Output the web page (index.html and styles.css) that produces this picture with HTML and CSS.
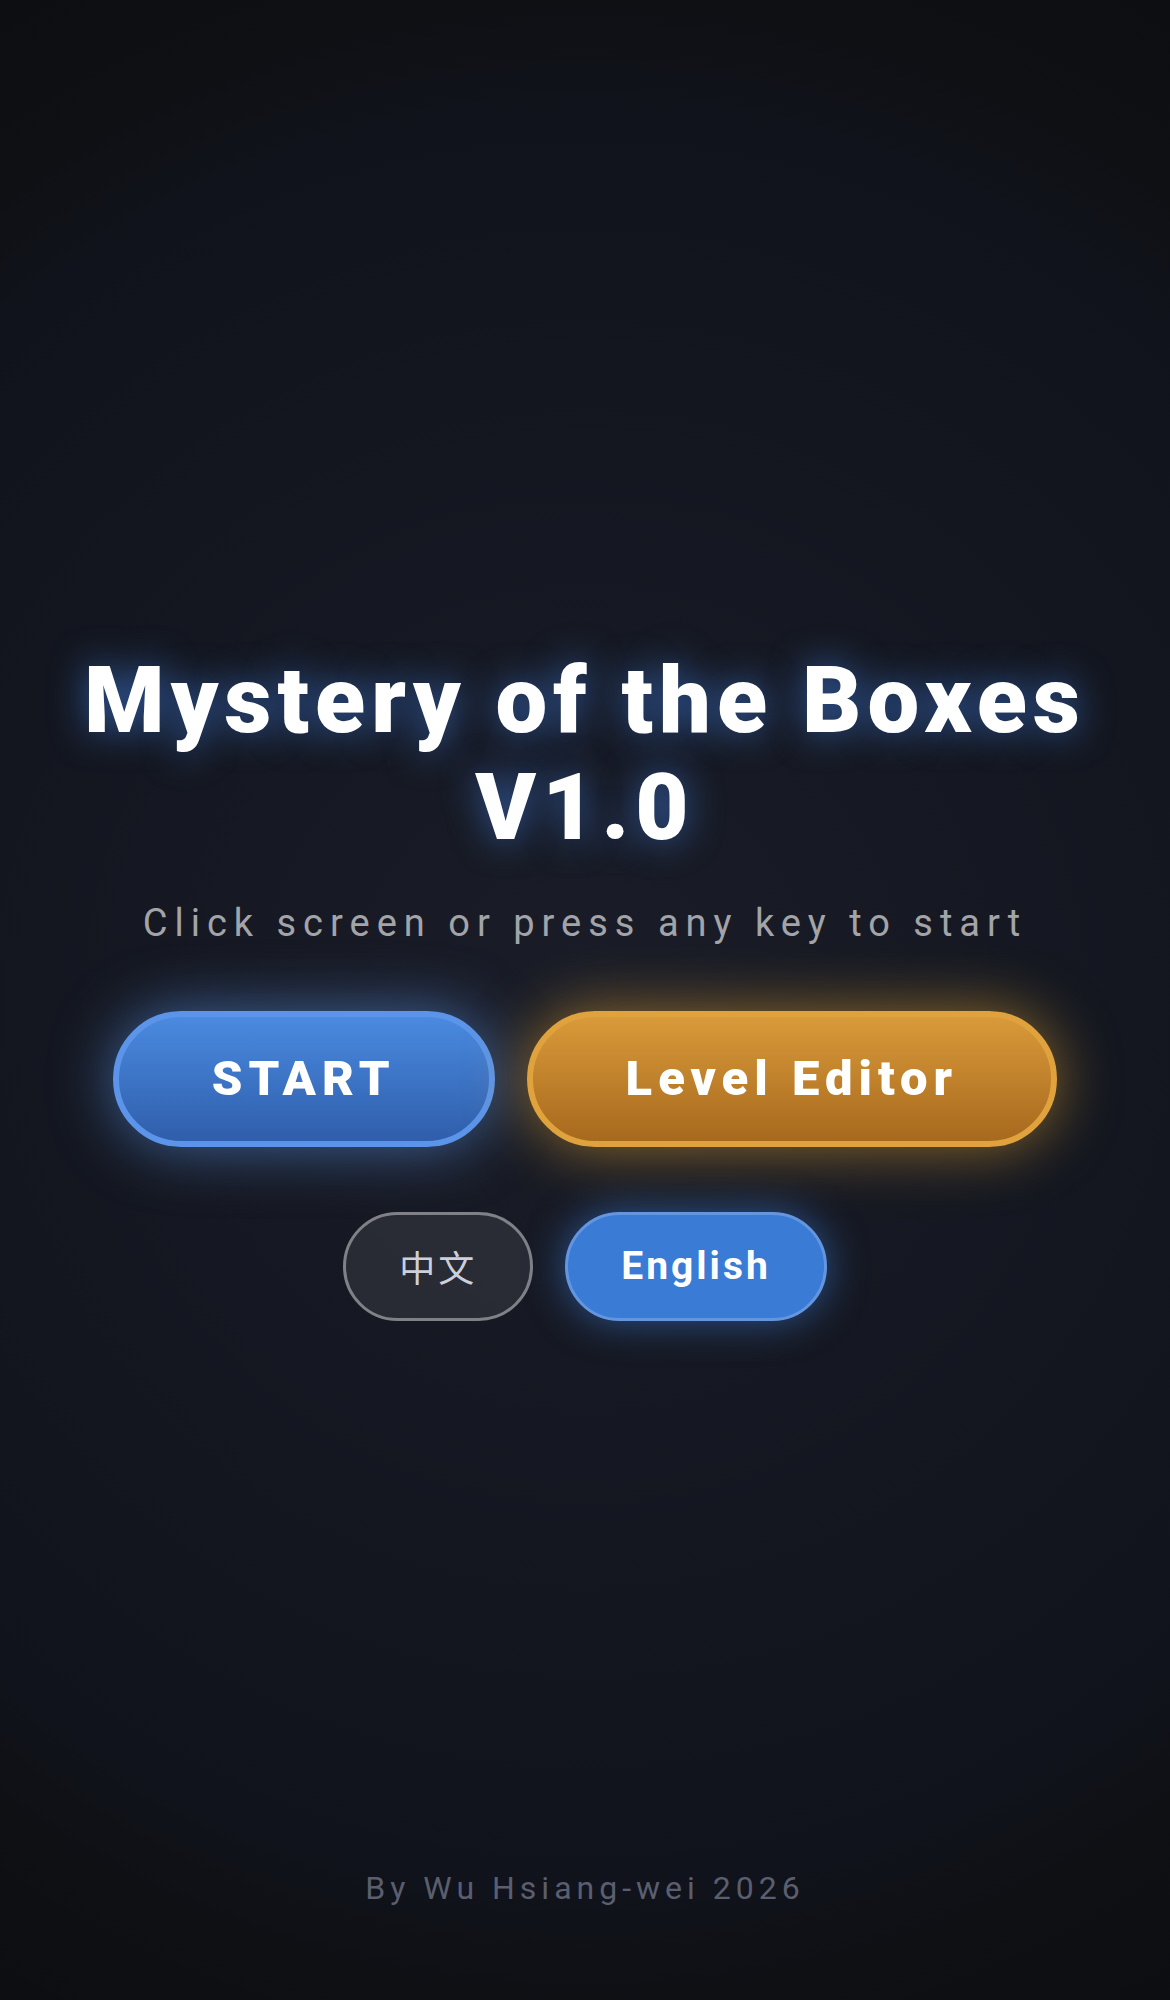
FILE: index.html
```html
<!DOCTYPE html>
<html lang="en">
<head>
    <meta charset="UTF-8">
    <meta name="viewport" content="width=device-width, initial-scale=1.0">
    <title>Mystery of the Boxes</title>
    <link rel="stylesheet" href="styles.css">
</head>
<body>
    <div class="start-screen">
        <main class="menu">
            <h1 class="title">Mystery of the Boxes V1.0</h1>
            <p class="hint">Click screen or press any key to start</p>

            <div class="actions">
                <button type="button" class="btn btn-start">START</button>
                <button type="button" class="btn btn-editor">Level Editor</button>
            </div>

            <!-- Language switch -->
            <div class="languages" role="group" aria-label="Language">
                <button type="button" class="lang-btn lang-zh" lang="zh-Hant" aria-pressed="false">中文</button>
                <button type="button" class="lang-btn active" aria-pressed="true">English</button>
            </div>
        </main>

        <footer class="credit">By Wu Hsiang-wei 2026</footer>
    </div>
</body>
</html>
```
FILE: styles.css
```css
* {
    margin: 0;
    padding: 0;
    box-sizing: border-box;
}

body {
    font-family: Roboto, 'Noto Sans CJK TC', sans-serif;
    background: #0e0f12;
    color: #fff;
}

/* Full-height screen: menu in the middle, credit at the bottom */
.start-screen {
    min-height: 100vh;
    display: grid;
    grid-template-rows: 1fr auto 1fr;
    padding: 0 64px 32px;
    background: radial-gradient(circle at center, #1a1d28 0%, #10131b 77%, #0f1014 86%, #0d0e11 100%);
}

.menu {
    grid-row: 2;
    display: flex;
    flex-direction: column;
    align-items: center;
    text-align: center;
}

.title {
    font-size: 92px;
    font-weight: 900;
    line-height: 107px;
    letter-spacing: 6px;
    margin-bottom: 39px;
    text-shadow: 0 0 36px rgba(74, 144, 255, 0.6);
}

.hint {
    font-size: 38px;
    line-height: 46px;
    letter-spacing: 7px;
    color: #a3a4a8;
    margin-bottom: 65px;
}

.actions,
.languages {
    display: flex;
    flex-wrap: wrap;
    justify-content: center;
    gap: 32px;
}

.actions {
    margin-bottom: 65px;
}

/* Main buttons */
.btn {
    font-family: inherit;
    font-size: 49px;
    font-weight: 900;
    line-height: 58px;
    letter-spacing: 6px;
    color: #fff;
    padding: 33px 93px;
    border: 6px solid;
    border-radius: 99px;
    cursor: pointer;
}

.btn-start {
    background: linear-gradient(to bottom, #4a8ae0, #2f5eab);
    border-color: #5b94e8;
    box-shadow: 0 0 60px rgba(91, 148, 232, 0.6);
}

.btn-editor {
    background: linear-gradient(to bottom, #d99a3a, #a7691d);
    border-color: #e0a23c;
    box-shadow: 0 0 60px rgba(224, 160, 48, 0.6);
}

/* Language buttons */
.lang-btn {
    font-family: inherit;
    font-size: 39px;
    line-height: 47px;
    letter-spacing: 3px;
    color: #ccd0da;
    padding: 28px 53px;
    background: rgba(255, 255, 255, 0.08);
    border: 3px solid #808186;
    border-radius: 99px;
    cursor: pointer;
}

.lang-zh {
    font-family: 'Noto Sans CJK TC', sans-serif;
    font-size: 36px;
}

.lang-btn.active {
    font-weight: 700;
    color: #fff;
    background: #3a7bd5;
    border-color: #6496e0;
    box-shadow: 0 0 39px rgba(58, 123, 213, 0.6);
}

.credit {
    grid-row: 3;
    align-self: end;
    text-align: center;
    font-size: 32px;
    line-height: 39px;
    letter-spacing: 5px;
    color: #5b5e6e;
    margin-bottom: 60px;
}
```
